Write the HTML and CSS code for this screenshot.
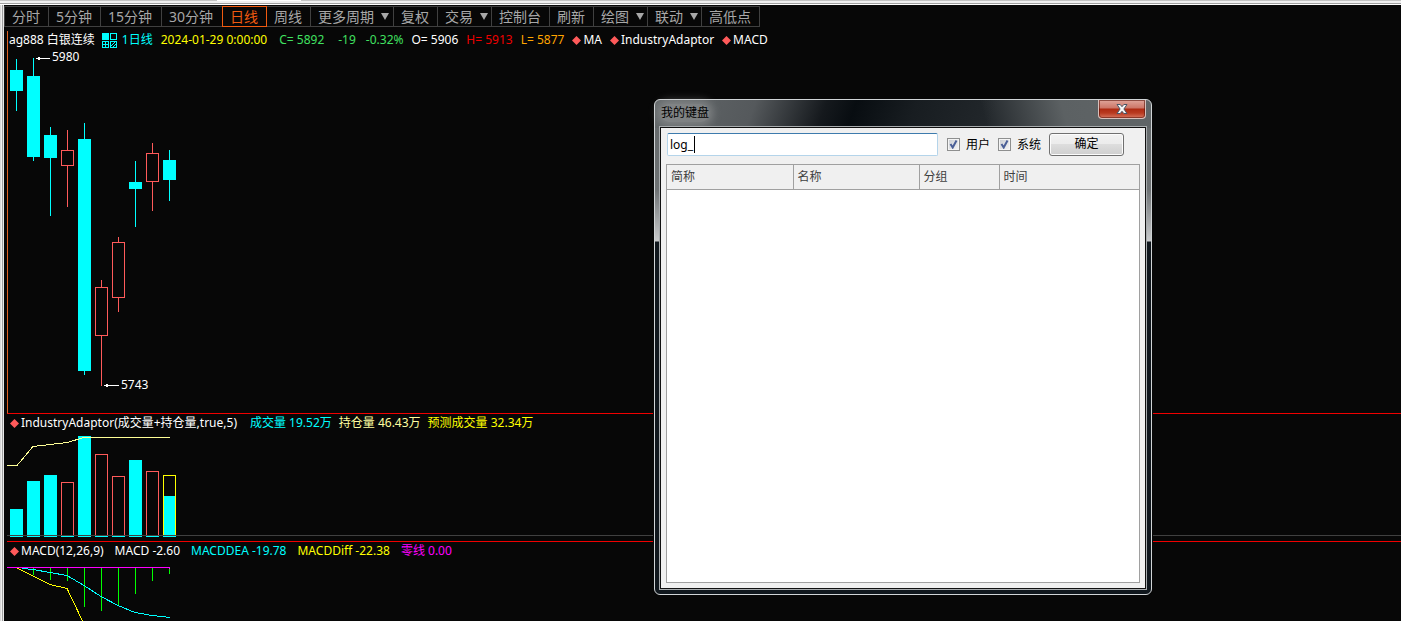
FILE: index.html
```html
<!DOCTYPE html>
<html lang="zh-CN">
<head>
<meta charset="utf-8">
<title>ag888 白银连续</title>
<link rel="stylesheet" href="styles.css">
</head>
<body>
<div class="strip"><span class="strip-tab"></span></div>
<div class="app">
  <nav class="periods">
    <button class="period">分时</button>
    <button class="period">5分钟</button>
    <button class="period roomy">15分钟</button>
    <button class="period roomy">30分钟</button>
    <button class="period active">日线</button>
    <button class="period">周线</button>
    <button class="period roomy">更多周期<i class="arrow"></i></button>
    <button class="period">复权</button>
    <button class="period">交易<i class="arrow"></i></button>
    <button class="period">控制台</button>
    <button class="period">刷新</button>
    <button class="period">绘图<i class="arrow"></i></button>
    <button class="period">联动<i class="arrow"></i></button>
    <button class="period">高低点</button>
  </nav>

  <main class="charts">
    <section class="pane price">
      <div class="legend quote">
        <span>ag888 白银连续</span>
        <svg class="grid-icon" width="15" height="15" fill="none" stroke="#00ffff" shape-rendering="crispEdges">
          <rect x="0" y="0" width="7" height="7" fill="#00ffff" stroke="none"/>
          <rect x="8.500" y=".5" width="6" height="6"/>
          <rect x=".5" y="8.500" width="6" height="6"/>
          <path d="M3.500 8v7M0 11.500h7"/>
          <rect x="8.500" y="8.500" width="6" height="6"/>
          <path d="M9 13l4-4M10 15l5-5" shape-rendering="auto"/>
        </svg>
        <span class="cyan cycle">1日线</span>
        <span class="yellow date">2024-01-29 0:00:00</span>
        <span class="green">C= 5892</span>
        <span class="green change">-19</span>
        <span class="green percent">-0.32%</span>
        <span>O= 5906</span>
        <span class="red">H= 5913</span>
        <span class="orange">L= 5877</span>
        <span class="mark"><svg class="diamond" viewBox="0 0 9 9"><path d="M4.500 0L9 4.500L4.500 9L0 4.500z"/></svg>MA</span>
        <span class="mark"><svg class="diamond" viewBox="0 0 9 9"><path d="M4.500 0L9 4.500L4.500 9L0 4.500z"/></svg>IndustryAdaptor</span>
        <span class="mark"><svg class="diamond" viewBox="0 0 9 9"><path d="M4.500 0L9 4.500L4.500 9L0 4.500z"/></svg>MACD</span>
      </div>
      <svg class="plot price-plot">
        <g transform="translate(-8 -49)">
          <path class="wick-down" d="M16.500 59V111M33.500 58V161M50.500 127V216M84.500 123V375M135.500 161V227M169.500 150V201"/>
          <path class="body-down" d="M10 70h13v21h-13zM27 76h13v81h-13zM44 135h13v23h-13zM78 139h13v232h-13zM129 182h13v7h-13zM163 160h13v20h-13z"/>
          <path class="up" d="M67.500 130V150M67.500 166V207M101.500 280V287M101.500 336V386M118.500 237V242M118.500 298V312M152.500 143V153M152.500 182V211"/>
          <path class="up" d="M61.500 150.500h12v15h-12zM95.500 287.500h12v48h-12zM112.500 242.500h12v55h-12zM146.500 153.500h12v28h-12z"/>
          <path class="pointer" d="M36 58.500H50M38 57.500h2M38 59.500h2M104 385.500H119M106 384.500h2M106 386.500h2"/>
          <text class="tag" x="52" y="61">5980</text>
          <text class="tag" x="121" y="389">5743</text>
        </g>
      </svg>
    </section>

    <section class="pane volume">
      <div class="legend sub">
        <span class="mark study">
          <svg class="diamond" viewBox="0 0 9 9"><path d="M4.500 0L9 4.500L4.500 9L0 4.500z"/></svg>IndustryAdaptor(成交量+持仓量,true,5)</span>
        <span class="cyan">成交量 19.52万</span>
        <span class="cream">持仓量 46.43万</span>
        <span class="yellow">预测成交量 32.34万</span>
      </div>
      <svg class="plot volume-plot">
        <g transform="translate(-7 -432)">
          <path class="body-down" d="M10 509h13v28h-13zM27 481h13v56h-13zM44 475h13v62h-13zM78 436h13v101h-13zM129 460h13v77h-13z"/>
          <path class="up" d="M61.500 536V482.500h12V536M95.500 536V454.500h12V536M112.500 536V476.500h12V536M146.500 536V471.500h12V536"/>
          <path class="forecast" d="M163.500 536V475.500h12V536"/>
          <path class="body-down" d="M164 496h11v40h-11zM61 536h13v1h-13zM95 536h13v1h-13zM112 536h13v1h-13zM146 536h13v1h-13zM163 536h13v1h-13z"/>
          <path class="interest" d="M7 465.500H17L33 446.500L67 442.500L84 437.500H170"/>
        </g>
        <line class="baseline" x1="0" y1="103.500" x2="100%" y2="103.500"/>
      </svg>
    </section>

    <section class="pane macd">
      <div class="legend sub wide">
        <span class="mark"><svg class="diamond" viewBox="0 0 9 9"><path d="M4.500 0L9 4.500L4.500 9L0 4.500z"/></svg>MACD(12,26,9)</span>
        <span>MACD -2.60</span>
        <span class="cyan">MACDDEA -19.78</span>
        <span class="yellow">MACDDiff -22.38</span>
        <span class="magenta">零线 0.00</span>
      </div>
      <svg class="plot macd-plot">
        <g transform="translate(-7 -560)">
          <path class="hist" d="M33.500 568V575M50.500 568V580M67.500 568V581M84.500 568V607M101.500 568V611M118.500 568V605M135.500 568V594M152.500 568V581M169.500 569V574"/>
          <path class="diff" d="M17 568L50 584.500L67 588.500L83 622"/>
          <path class="dea" d="M22 568.500L33 569.500L50 572.500L67 575.500L84 585.500L101 596.500L118 605.500L135 612.500L152 615.500L170 617.500"/>
          <path class="zero" d="M7 567.500H170M169.500 567v2"/>
        </g>
      </svg>
    </section>
  </main>
</div>

<section class="dialog" role="dialog" aria-labelledby="dialog-title">
  <header class="titlebar">
    <h1 class="title" id="dialog-title">我的键盘</h1>
    <button class="close" aria-label="关闭">
      <svg width="12" height="10" viewBox="0 0 12 10"><path d="M1 .5h3.200L6 2.700L7.800 .5H11L7.900 5L11 9.500H7.800L6 7.300L4.200 9.500H1L4.100 5z" fill="#f6f6f6" stroke="#4a5566" stroke-width="1"/></svg>
    </button>
  </header>
  <div class="client">
    <form class="search" onsubmit="return false">
      <div class="field"><input class="query" type="text" value="log_" aria-label="搜索"><span class="caret"></span></div>
      <label class="check"><input type="checkbox" checked>用户</label>
      <label class="check"><input type="checkbox" checked>系统</label>
      <button class="ok" type="submit">确定</button>
    </form>
    <div class="list">
      <table class="results">
        <colgroup><col class="c1"><col class="c2"><col class="c3"><col></colgroup>
        <thead><tr><th>简称</th><th>名称</th><th>分组</th><th>时间</th></tr></thead>
      </table>
    </div>
  </div>
</section>
</body>
</html>
```

FILE: styles.css
```css
* { box-sizing: border-box; }

body {
  margin: 0;
  min-height: 100vh;
  display: flex;
  flex-direction: column;
  overflow: hidden;
  background: #070707;
  color: #fff;
  font: 12px/18px "Noto Sans", "Noto Sans CJK SC", sans-serif;
}

button, input { font: inherit; }

.strip {
  height: 5px;
  background: #f0f0f0;
  border-top: 1px solid #c4c4c4;
  border-bottom: 1px solid #fff;
  box-shadow: inset 0 -1px #a0a0a0;
}
.strip-tab {
  display: block;
  width: 84px;
  height: 1px;
  margin: -1px 0 0 217px;
  background: #fff;
}

.app {
  flex: 1;
  padding-top: 1px;
  border-left: 1px solid #d8d8d8;
  box-shadow: inset 1px 0 #f0f0f0, inset 2px 0 #a0a0a0, inset 3px 0 #e8e8e8;
}

.periods { display: flex; margin-left: 3px; }
.period {
  display: flex;
  align-items: center;
  height: 21px;
  margin-right: -1px;
  padding: 0 8px 0 7px;
  border: 1px solid #404040;
  background: none;
  color: #a8a8a8;
  font-size: 14px;
  line-height: 19px;
  white-space: nowrap;
}
.period.roomy { padding-right: 9px; }
.period.active { position: relative; border-color: #f05a10; color: #f05a10; }
.arrow {
  margin: 0 -5px 0 7px;
  border: 4px solid transparent;
  border-top: 7px solid #a8a8a8;
  border-bottom: 0;
}

.charts { padding: 4px 0 0 6px; }
.pane { display: flex; flex-direction: column; }
.price { border-left: 1px solid #e06020; border-bottom: 1px solid #f00000; }
.volume { border-bottom: 1px solid #f00000; }
.legend {
  display: flex;
  align-items: center;
  gap: 8px;
  height: 18px;
  padding-left: 1px;
  white-space: nowrap;
}
.legend.sub { gap: 7px; padding-left: 3px; }
.legend.wide { gap: 11px; }
.mark { display: flex; align-items: center; gap: 2px; }
.study { margin-right: 6px; }
.diamond { width: 9px; height: 9px; fill: #ff5a5a; }
.grid-icon { margin-left: -1px; }
.cycle { margin-left: -3px; }
.date { margin-right: 4px; }
.change { margin-left: 6px; }
.percent { margin-left: 2px; }

.cyan { color: #00ffff; }
.yellow { color: #ffff00; }
.cream { color: #ffffa0; }
.green { color: #40e060; }
.red { color: #f00000; }
.orange { color: #ffa500; }
.magenta { color: #ff00ff; }

.plot { display: block; width: 100%; fill: none; shape-rendering: crispEdges; }
.price-plot { height: 364px; }
.volume-plot { height: 109px; }
.macd-plot { height: 61px; }
.wick-down { stroke: #00ffff; }
.body-down { fill: #00ffff; }
.up { stroke: #ff5a5a; }
.pointer { stroke: #fff; }
.tag { fill: #fff; }
.forecast { stroke: #ffff00; }
.interest { stroke: #ffff96; }
.baseline { stroke: #404040; }
.hist { stroke: #00ff00; }
.diff { stroke: #ffff00; }
.dea { stroke: #00ffff; }
.zero { stroke: #ff00ff; }

.dialog {
  position: absolute;
  top: 99px;
  left: 654px;
  width: 498px;
  height: 496px;
  display: flex;
  flex-direction: column;
  padding: 0 5px 5px;
  border: 1px solid #d0d4d6;
  border-radius: 6px;
  box-shadow: 0 0 0 1px #070707;
  background:
    linear-gradient(75deg, transparent 66%, #5c6163 82%, #606567 100%) top / 100% 28px no-repeat,
    linear-gradient(110deg, #63686a 0%, #55595c 20%, #15191d 34%, #080d11 40%, #181d21 52%, #22272b 68%) top / 100% 28px no-repeat,
    linear-gradient(#63686a 0, #6e7274 90px, #c8cacc 141px, #10171d 142px, #10171d 100%);
  color: #000;
}
.titlebar {
  display: flex;
  align-items: flex-start;
  justify-content: space-between;
  height: 27px;
  padding-left: 1px;
}
.title {
  margin: 4px 0 0;
  font-size: 12px;
  font-weight: 400;
  line-height: 18px;
  background: rgba(190, 190, 190, .35);
  box-shadow: 0 0 8px 4px rgba(190, 190, 190, .35);
  border-radius: 8px;
}
.close {
  display: flex;
  align-items: center;
  justify-content: center;
  width: 48px;
  height: 19px;
  padding: 0 0 1px;
  border: 1px solid #d8c0bc;
  border-top: 0;
  border-radius: 0 0 4px 4px;
  box-shadow: inset 0 0 0 1px rgba(90, 20, 10, .6);
  background: linear-gradient(#e0a69c 0, #cd7668 8px, #ae2a12 9px, #b93a20 13px, #d87660 100%);
}
.client {
  flex: 1;
  display: flex;
  flex-direction: column;
  gap: 8px;
  padding: 5px;
  border: 1px solid #101010;
  outline: 1px solid #a8acae;
  background: #f0f0f0;
}
.search { display: flex; align-items: center; padding: 0 16px 0 1px; }
.field { position: relative; flex: 1; margin-right: 9px; }
.query {
  display: block;
  width: 100%;
  height: 23px;
  padding: 0 2px;
  border: 1px solid #b4d4ea;
  border-top-color: #3d7bad;
  border-radius: 2px;
  outline: none;
  background: #fff;
  color: #000;
}
.caret { position: absolute; left: 27px; top: 3px; width: 1px; height: 17px; background: #000; }
.check { display: flex; align-items: center; gap: 6px; margin-right: 8px; }
.check input {
  appearance: none;
  width: 13px;
  height: 13px;
  margin: 0;
  border: 1px solid #8e8f8f;
  background:
    url("data:image/svg+xml,%3Csvg xmlns='http://www.w3.org/2000/svg' viewBox='0 0 11 11'%3E%3Cpath d='M2.500 5L4.700 8.500L8.500 1.500' fill='none' stroke='%234a5f97' stroke-width='2'/%3E%3C/svg%3E"),
    linear-gradient(135deg, #c8ccd2, #f6f6f6);
  box-shadow: inset 0 0 0 1px #f4f4f4;
}
.ok {
  width: 75px;
  height: 23px;
  padding: 0 0 1px;
  border: 1px solid #707070;
  border-radius: 3px;
  box-shadow: inset 0 0 0 1px #fcfcfc;
  background: linear-gradient(#f2f2f2 0, #ebebeb 50%, #dddddd 50%, #cfcfcf 100%);
  color: #000;
  line-height: 18px;
}
.list { flex: 1; border: 1px solid #a0a0a0; background: #fff; }
.results { width: 100%; table-layout: fixed; border-collapse: collapse; }
.c1, .c2 { width: 126px; }
.c3 { width: 80px; }
.results th {
  height: 24px;
  padding: 0 4px;
  border-right: 1px solid #a0a0a0;
  border-bottom: 1px solid #a0a0a0;
  background: #f0f0f0;
  color: #404040;
  font-weight: 400;
  text-align: left;
}
.results th:last-child { border-right: 0; }
```
